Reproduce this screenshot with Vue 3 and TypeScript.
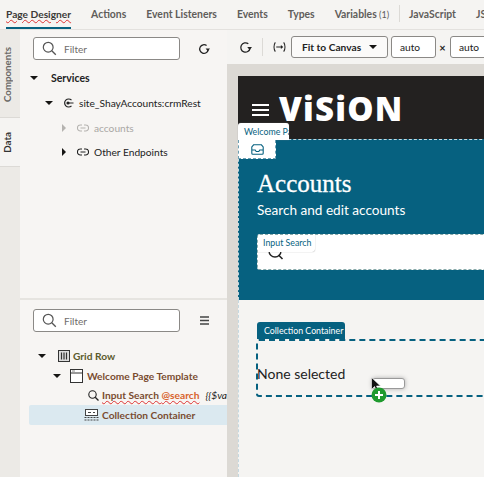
<template>
  <div class="app">
    <nav class="tabs">
      <a v-for="t in tabs" :key="t.label" class="tab" :class="{ active: t.active, sep: t.sep }">
        <span :class="{ squiggle: t.active }">{{ t.label }}</span><small v-if="t.count"> ({{ t.count }})</small>
      </a>
    </nav>

    <div class="main">
      <aside class="rail">
        <div class="rail-tab comp"><span>Components</span></div>
        <div class="rail-tab data"><span>Data</span></div>
        <div class="rail-tab rest"></div>
      </aside>

      <section class="panel">
        <div class="panel-top">
          <div class="filter-row">
            <label class="filter">
              <svg width="15" height="15" viewBox="0 0 15 15"><circle cx="6.2" cy="6.2" r="4.9" fill="none" stroke="#555" stroke-width="1.2" /><path d="M9.8 9.8l4 4" stroke="#555" stroke-width="1.3" /></svg>
              <span>Filter</span>
            </label>
            <svg class="refresh" width="12" height="12" viewBox="0 0 12 12"><path d="M10.2 6.8A4.3 4.3 0 1 1 8.6 2.6" fill="none" stroke="#222" stroke-width="1.3" /><path d="M7.6 5.6h4.4L9.8 8.2z" fill="#222" /></svg>
          </div>
          <ul class="tree">
            <li class="node l0"><i class="tri down"></i><b>Services</b></li>
            <li class="node l1">
              <i class="tri down"></i>
              <svg class="ico" width="12" height="10" viewBox="0 0 12 10"><path d="M9.5 2.2A4 4 0 1 0 9.5 7.8" fill="none" stroke="#222" stroke-width="1.2" /><circle cx="6" cy="5" r="1.6" fill="#222" /><path d="M6 5h5.5" stroke="#222" /></svg>
              <span>site_ShayAccounts:crmRest</span>
            </li>
            <li class="node l2 dim">
              <i class="tri right"></i>
              <svg class="ico" width="12" height="8" viewBox="0 0 12 8"><path d="M5 1H3.4a3 3 0 0 0 0 6H5M7 1h1.600a3 3 0 0 1 0 6H7M3.5 4h5" fill="none" stroke="currentColor" stroke-width="1.1" /></svg>
              <span>accounts</span>
            </li>
            <li class="node l2">
              <i class="tri right"></i>
              <svg class="ico" width="12" height="8" viewBox="0 0 12 8"><path d="M5 1H3.4a3 3 0 0 0 0 6H5M7 1h1.600a3 3 0 0 1 0 6H7M3.5 4h5" fill="none" stroke="currentColor" stroke-width="1.1" /></svg>
              <span>Other Endpoints</span>
            </li>
          </ul>
        </div>

        <div class="panel-bottom">
          <div class="filter-row">
            <label class="filter">
              <svg width="15" height="15" viewBox="0 0 15 15"><circle cx="6.2" cy="6.2" r="4.9" fill="none" stroke="#555" stroke-width="1.2" /><path d="M9.8 9.8l4 4" stroke="#555" stroke-width="1.3" /></svg>
              <span>Filter</span>
            </label>
            <svg class="menu" width="9" height="9" viewBox="0 0 9 9"><path d="M0 1h9M0 4.5h9M0 8h9" stroke="#444" stroke-width="1.4" /></svg>
          </div>
          <ul class="struct">
            <li class="row s0">
              <i class="tri down"></i>
              <svg class="ico" width="12" height="12" viewBox="0 0 12 12"><rect x=".5" y=".5" width="11" height="11" fill="#ddd" stroke="#333" /><path d="M3.5 2.5v7M6 2.5v7M8.5 2.5v7" stroke="#333" stroke-width="1.2" /></svg>
              <b class="olive">Grid Row</b>
            </li>
            <li class="row s1">
              <i class="tri down"></i>
              <svg class="ico" width="13" height="14" viewBox="0 0 13 14"><rect x=".5" y=".5" width="12" height="13" fill="#fff" stroke="#333" /><path d="M.5 4h12" stroke="#333" /><path d="M2 2h3" stroke="#888" /></svg>
              <b class="brown">Welcome Page Template</b>
            </li>
            <li class="row s2">
              <svg class="ico" width="11" height="11" viewBox="0 0 11 11"><circle cx="4.5" cy="4.5" r="3.7" fill="none" stroke="#222" stroke-width="1.1" /><path d="M7.2 7.2l3.3 3.3" stroke="#222" stroke-width="1.3" /></svg>
              <b class="brown squiggle">Input Search <em>@search</em></b>
              <i class="expr">{{ expr }}</i>
            </li>
            <li class="row s3 selected">
              <svg class="ico" width="15" height="12" viewBox="0 0 15 12"><rect x="1.5" y=".5" width="12" height="6" fill="#fff" stroke="#444" /><path d="M4 3.5h3M9 3.5h2" stroke="#444" /><path d="M.5 8.5h14M.5 11h14" stroke="#444" stroke-dasharray="2 1" /></svg>
              <b class="brown">Collection Container</b>
            </li>
          </ul>
        </div>
      </section>

      <section class="canvas">
        <div class="toolbar">
          <svg class="tool-refresh" width="13" height="13" viewBox="0 0 12 12"><path d="M10.2 6.8A4.3 4.3 0 1 1 8.6 2.6" fill="none" stroke="#222" stroke-width="1.2" /><path d="M7.6 5.6h4.4L9.8 8.2z" fill="#222" /></svg>
          <span class="divider"></span>
          <svg class="fit" width="13" height="12" viewBox="0 0 14 12"><path d="M2.5 1C.6 3.5.6 8.5 2.5 11M11.5 1c1.9 2.5 1.9 7.5 0 10M3.5 6h6" fill="none" stroke="#222" stroke-width="1.1" /><path d="M8.5 3.8L11 6 8.5 8.2z" fill="#222" /></svg>
          <div class="select">Fit to Canvas<i class="tri down"></i></div>
          <div class="size">auto</div>
          <span class="times">×</span>
          <div class="size">auto</div>
        </div>

        <div class="stage">
          <div class="page">
            <header class="brand">
              <span class="burger"><i></i><i></i><i></i></span>
              <span class="logo">ViSiON</span>
            </header>
            <div class="hero">
              <div class="label light welcome">Welcome Pa</div>
              <div class="inbox">
                <svg width="13" height="11" viewBox="0 0 13 11"><path d="M.8 6V3L2.6.8h7.800L12.200 3v6.200a1 1 0 0 1-1 1H1.800a1 1 0 0 1-1-1zM.8 6h3.400l1 1.500h2.600l1-1.500h3.400" fill="none" stroke="#066180" stroke-width="1.1" /></svg>
              </div>
              <h1>Accounts</h1>
              <p>Search and edit accounts</p>
              <div class="search">
                <div class="label light input-label">Input Search</div>
                <svg class="glass" width="16" height="14" viewBox="0 0 16 14"><circle cx="7" cy="3" r="6" fill="none" stroke="#222" stroke-width="1.4" /><path d="M10.5 7l4 4" stroke="#222" stroke-width="1.6" /></svg>
              </div>
            </div>
            <div class="body">
              <div class="label dark">Collection Container</div>
              <div class="collection">
                <span class="none">None selected</span>
                <div class="drag">
                  <span class="ghost"></span>
                  <svg class="cursor" width="10" height="15" viewBox="0 0 10 15"><path d="M.5.5v12l3-3 2 4.5 2-1-2-4h4z" fill="#111" stroke="#fff" stroke-width=".6" /></svg>
                  <svg class="plus" width="16" height="16" viewBox="0 0 16 16"><circle cx="8" cy="8" r="7.5" fill="#1f9a2e" /><path d="M8 4v8M4 8h8" stroke="#fff" stroke-width="2" /></svg>
                </div>
              </div>
            </div>
          </div>
        </div>
      </section>
    </div>
  </div>
</template>

<script setup lang="ts">
interface Tab {
  label: string
  active?: boolean
  count?: number
  sep?: boolean
}

const tabs: Tab[] = [
  { label: 'Page Designer', active: true },
  { label: 'Actions' },
  { label: 'Event Listeners' },
  { label: 'Events' },
  { label: 'Types' },
  { label: 'Variables', count: 1 },
  { label: 'JavaScript', sep: true },
  { label: 'JSON' }
]

const expr = '{{$variables...'
</script>

<style>
html,
body {
  margin: 0;
  overflow: hidden;
}
</style>

<style scoped>
.app {
  width: 484px;
  height: 477px;
  display: flex;
  flex-direction: column;
  overflow: hidden;
  background: #f5f4f2;
  color: #222;
  font-family: Lato, "Noto Sans", sans-serif;
  font-size: 10.2px;
}

.tabs {
  height: 30px;
  flex: none;
  display: flex;
  gap: 20px;
  padding-left: 6px;
  box-sizing: border-box;
  border-bottom: 1px solid #e3e1de;
  white-space: nowrap;
  overflow: hidden;
}
.tab {
  position: relative;
  line-height: 28px;
  color: #5f5d5a;
  font-weight: 700;
  font-size: 10.4px;
}
.tab small {
  font-weight: 400;
  font-size: 9px;
}
.tab.active {
  color: #3c3a38;
  font-size: 10.2px;
}
.tab.active::after {
  content: "";
  position: absolute;
  left: 0;
  right: 0;
  bottom: 0;
  height: 2px;
  background: #066180;
}
.tab.sep::before {
  content: "";
  position: absolute;
  left: -10px;
  top: 5px;
  height: 17px;
  border-left: 1px solid #dcdad6;
}

.squiggle {
  text-decoration: underline wavy #d33;
  text-decoration-thickness: 1px;
  text-underline-offset: 1px;
}

.main {
  flex: 1;
  display: flex;
  min-height: 0;
}

.rail {
  width: 20px;
  flex: none;
  display: flex;
  flex-direction: column;
  background: #eceae6;
}
.rail-tab {
  display: flex;
  align-items: center;
  justify-content: flex-start;
  padding-left: 1px;
  box-sizing: border-box;
  font-size: 9.7px;
  font-weight: 700;
  color: #6a6865;
}
.rail-tab span {
  writing-mode: vertical-rl;
  transform: rotate(180deg);
  line-height: 12px;
}
.comp {
  height: 88px;
  flex: none;
  padding-top: 1px;
  border-bottom: 1px solid #dcdad6;
}
.data {
  height: 48px;
  background: #f5f4f2;
  color: #333;
  flex: none;
}
.rest {
  flex: 1;
  border-top: 1px solid #dcdad6;
}

.panel {
  width: 207px;
  flex: none;
  display: flex;
  flex-direction: column;
  background: #f7f5f3;
  overflow: hidden;
}
.panel-top {
  height: 270px;
  flex: none;
  box-sizing: border-box;
  padding: 7px 0 0 13px;
  border-bottom: 2px solid #e6e4e0;
}
.panel-bottom {
  flex: 1;
  padding: 9px 0 0 13px;
}

.filter-row {
  display: flex;
  align-items: center;
}
.filter {
  width: 147px;
  height: 23px;
  box-sizing: border-box;
  display: flex;
  align-items: center;
  gap: 7px;
  padding-left: 8px;
  background: #fff;
  border: 1px solid #8b8986;
  border-radius: 3px;
  font-size: 10px;
  color: #6f6d6a;
}
.refresh {
  margin-left: 18px;
}
.menu {
  margin-left: 20px;
}

.tree,
.struct {
  list-style: none;
  margin: 0;
  padding: 0;
}
.tree {
  margin-top: 6px;
}
.node {
  height: 24.67px;
  display: flex;
  align-items: center;
  color: #222;
}
.node .ico {
  margin-right: 5px;
  color: #222;
  flex: none;
}
.l0 b {
  font-size: 10.5px;
}
.l0 .tri {
  margin: 0 13px 0 -3px;
}
.l1 {
  padding-left: 12px;
}
.l1 .tri {
  margin-right: 9px;
}
.l2 {
  padding-left: 29px;
}
.l2 .tri {
  margin-right: 11px;
}
.dim {
  color: #aaa8a5;
}
.node.dim .ico {
  color: #b5b3b0;
}
.node.dim .tri {
  border-left-color: #b5b3b0;
}

.tri {
  display: inline-block;
  width: 0;
  height: 0;
  flex: none;
}
.tri.down {
  border-left: 4px solid transparent;
  border-right: 4px solid transparent;
  border-top: 4px solid #161513;
}
.tri.right {
  border-top: 4px solid transparent;
  border-bottom: 4px solid transparent;
  border-left: 4px solid #161513;
}

.struct {
  margin: 14px 0 0 -4px;
}
.row {
  height: 19.8px;
  display: flex;
  align-items: center;
  white-space: nowrap;
  box-sizing: border-box;
}
.row .ico {
  flex: none;
}
.olive {
  color: #5b5a2c;
}
.brown {
  color: #7a4c30;
}
.brown em {
  color: #d8622a;
  font-style: normal;
}
.s0 {
  padding-left: 9px;
}
.s0 .tri {
  margin-right: 12px;
}
.s0 .ico {
  margin-right: 3px;
}
.s1 {
  padding-left: 24px;
}
.s1 .tri {
  margin-right: 9px;
}
.s1 .ico {
  margin-right: 4px;
}
.s2 {
  padding-left: 59px;
}
.s2 .ico {
  margin-right: 3px;
}
.expr {
  margin-left: 6px;
  color: #222;
  font-style: italic;
}
.s3 {
  padding-left: 55px;
  background: #dbe9f0;
  border-radius: 2px 0 0 2px;
}
.s3 .ico {
  margin-right: 3px;
}

.canvas {
  flex: 1;
  min-width: 0;
  display: flex;
  flex-direction: column;
  overflow: hidden;
}
.toolbar {
  height: 34px;
  flex: none;
  display: flex;
  align-items: center;
  padding-left: 12px;
  white-space: nowrap;
}
.toolbar > * {
  flex: none;
}
.divider {
  height: 18px;
  border-left: 1px solid #dcdad6;
  margin: 0 10px;
}
.select {
  margin-left: 5px;
  width: 97px;
  height: 22px;
  box-sizing: border-box;
  display: flex;
  align-items: center;
  justify-content: space-between;
  padding: 0 10px;
  background: #fbfaf9;
  border: 1px solid #8b8986;
  border-radius: 3px;
  font-weight: 700;
}
.size {
  margin-left: 3px;
  width: 45px;
  height: 22px;
  box-sizing: border-box;
  padding-left: 8px;
  line-height: 20px;
  background: #fff;
  border: 1px solid #8b8986;
  border-radius: 3px;
}
.times {
  margin: 0 2px 0 3px;
  font-size: 11px;
  font-weight: 700;
  width: 7px;
  text-align: center;
}
.times + .size {
  margin-left: 2px;
}

.stage {
  flex: 1;
  min-height: 0;
  background: #dcd9d4;
  padding: 12px 0 0 11px;
}
.page {
  width: 400px;
  height: 100%;
  background: #f5f4f2;
  display: flex;
  flex-direction: column;
}
.brand {
  height: 63px;
  flex: none;
  box-sizing: border-box;
  background: #232120;
  display: flex;
  align-items: center;
  padding: 0 0 0 14px;
  gap: 10px;
}
.burger {
  display: flex;
  flex-direction: column;
  gap: 3px;
  width: 17px;
  margin-top: 5px;
}
.burger i {
  height: 2px;
  background: #fff;
  display: block;
}
.logo {
  color: #fff;
  font-family: "Open Sans", sans-serif;
  font-weight: 800;
  font-size: 33px;
  letter-spacing: 1.2px;
  line-height: 1;
  margin-top: 1px;
}
.hero {
  position: relative;
  height: 161px;
  flex: none;
  box-sizing: border-box;
  background: #066180;
  border-top: 1px dashed #c4d8e0;
  border-left: 1px dashed #c4d8e0;
  padding: 30px 0 0 18px;
  color: #fff;
}
h1 {
  margin: 0;
  font-family: "Liberation Serif", serif;
  font-size: 25px;
  font-weight: 400;
  line-height: 28px;
  -webkit-text-stroke: 0.3px #fff;
}
.hero p {
  margin: 2px 0 0;
  font-size: 13.6px;
  line-height: 20px;
}
.label {
  position: absolute;
  box-sizing: border-box;
  white-space: nowrap;
  font-size: 8.8px;
  line-height: 17px;
  height: 17px;
  padding: 0 6px;
  border-radius: 3px 3px 0 0;
}
.label.light {
  background: #fff;
  color: #066180;
  box-shadow: 0 0 1px #888;
}
.welcome {
  left: -1px;
  top: -17px;
  width: 51px;
  overflow: hidden;
  padding: 0 0 0 6px;
}
.inbox {
  position: absolute;
  left: -1px;
  top: 0;
  width: 38px;
  height: 19px;
  background: #fff;
  display: flex;
  align-items: center;
  justify-content: center;
  border: 1px dashed #6c9fb2;
  border-top: 0;
  box-sizing: border-box;
}
.search {
  position: absolute;
  left: 18px;
  top: 94px;
  width: 400px;
  height: 36px;
  box-sizing: border-box;
  background: #fff;
  border: 1px dashed #8aa;
  border-radius: 3px;
  overflow: hidden;
}
.input-label {
  left: -1px;
  top: -1px;
  width: 58px;
  height: 18px;
  padding: 0 0 0 6px;
  border-radius: 0 0 3px 0;
  z-index: 1;
}
.glass {
  position: absolute;
  left: 10px;
  top: 13px;
}
.body {
  position: relative;
  flex: 1;
  padding: 22px 0 0 19px;
  border-left: 1px dashed #c4d8e0;
  box-sizing: border-box;
}
.label.dark {
  position: static;
  display: block;
  width: 88px;
  background: #066180;
  color: #fff;
  padding: 0 0 0 7px;
  margin-left: -1px;
}
.collection {
  position: relative;
  width: 400px;
  height: 58px;
  box-sizing: border-box;
  margin-left: -2px;
  border: 2px dashed #066180;
  border-radius: 3px;
  display: flex;
  align-items: center;
  font-size: 14px;
  color: #222;
  padding-top: 10px;
}
.none {
  margin-left: -1px;
}
.drag {
  position: absolute;
  left: 113px;
  top: 36px;
  width: 36px;
  height: 26px;
}
.cursor {
  position: absolute;
  left: 0;
  top: 0;
  z-index: 1;
}
.ghost {
  position: absolute;
  left: 1px;
  top: 1px;
  width: 33px;
  height: 11px;
  box-sizing: border-box;
  background: #fff;
  border: 1px solid #999;
  border-radius: 3px;
  box-shadow: 0 0 4px #aaa;
}
.plus {
  position: absolute;
  left: 0;
  top: 10px;
  z-index: 2;
}
</style>
